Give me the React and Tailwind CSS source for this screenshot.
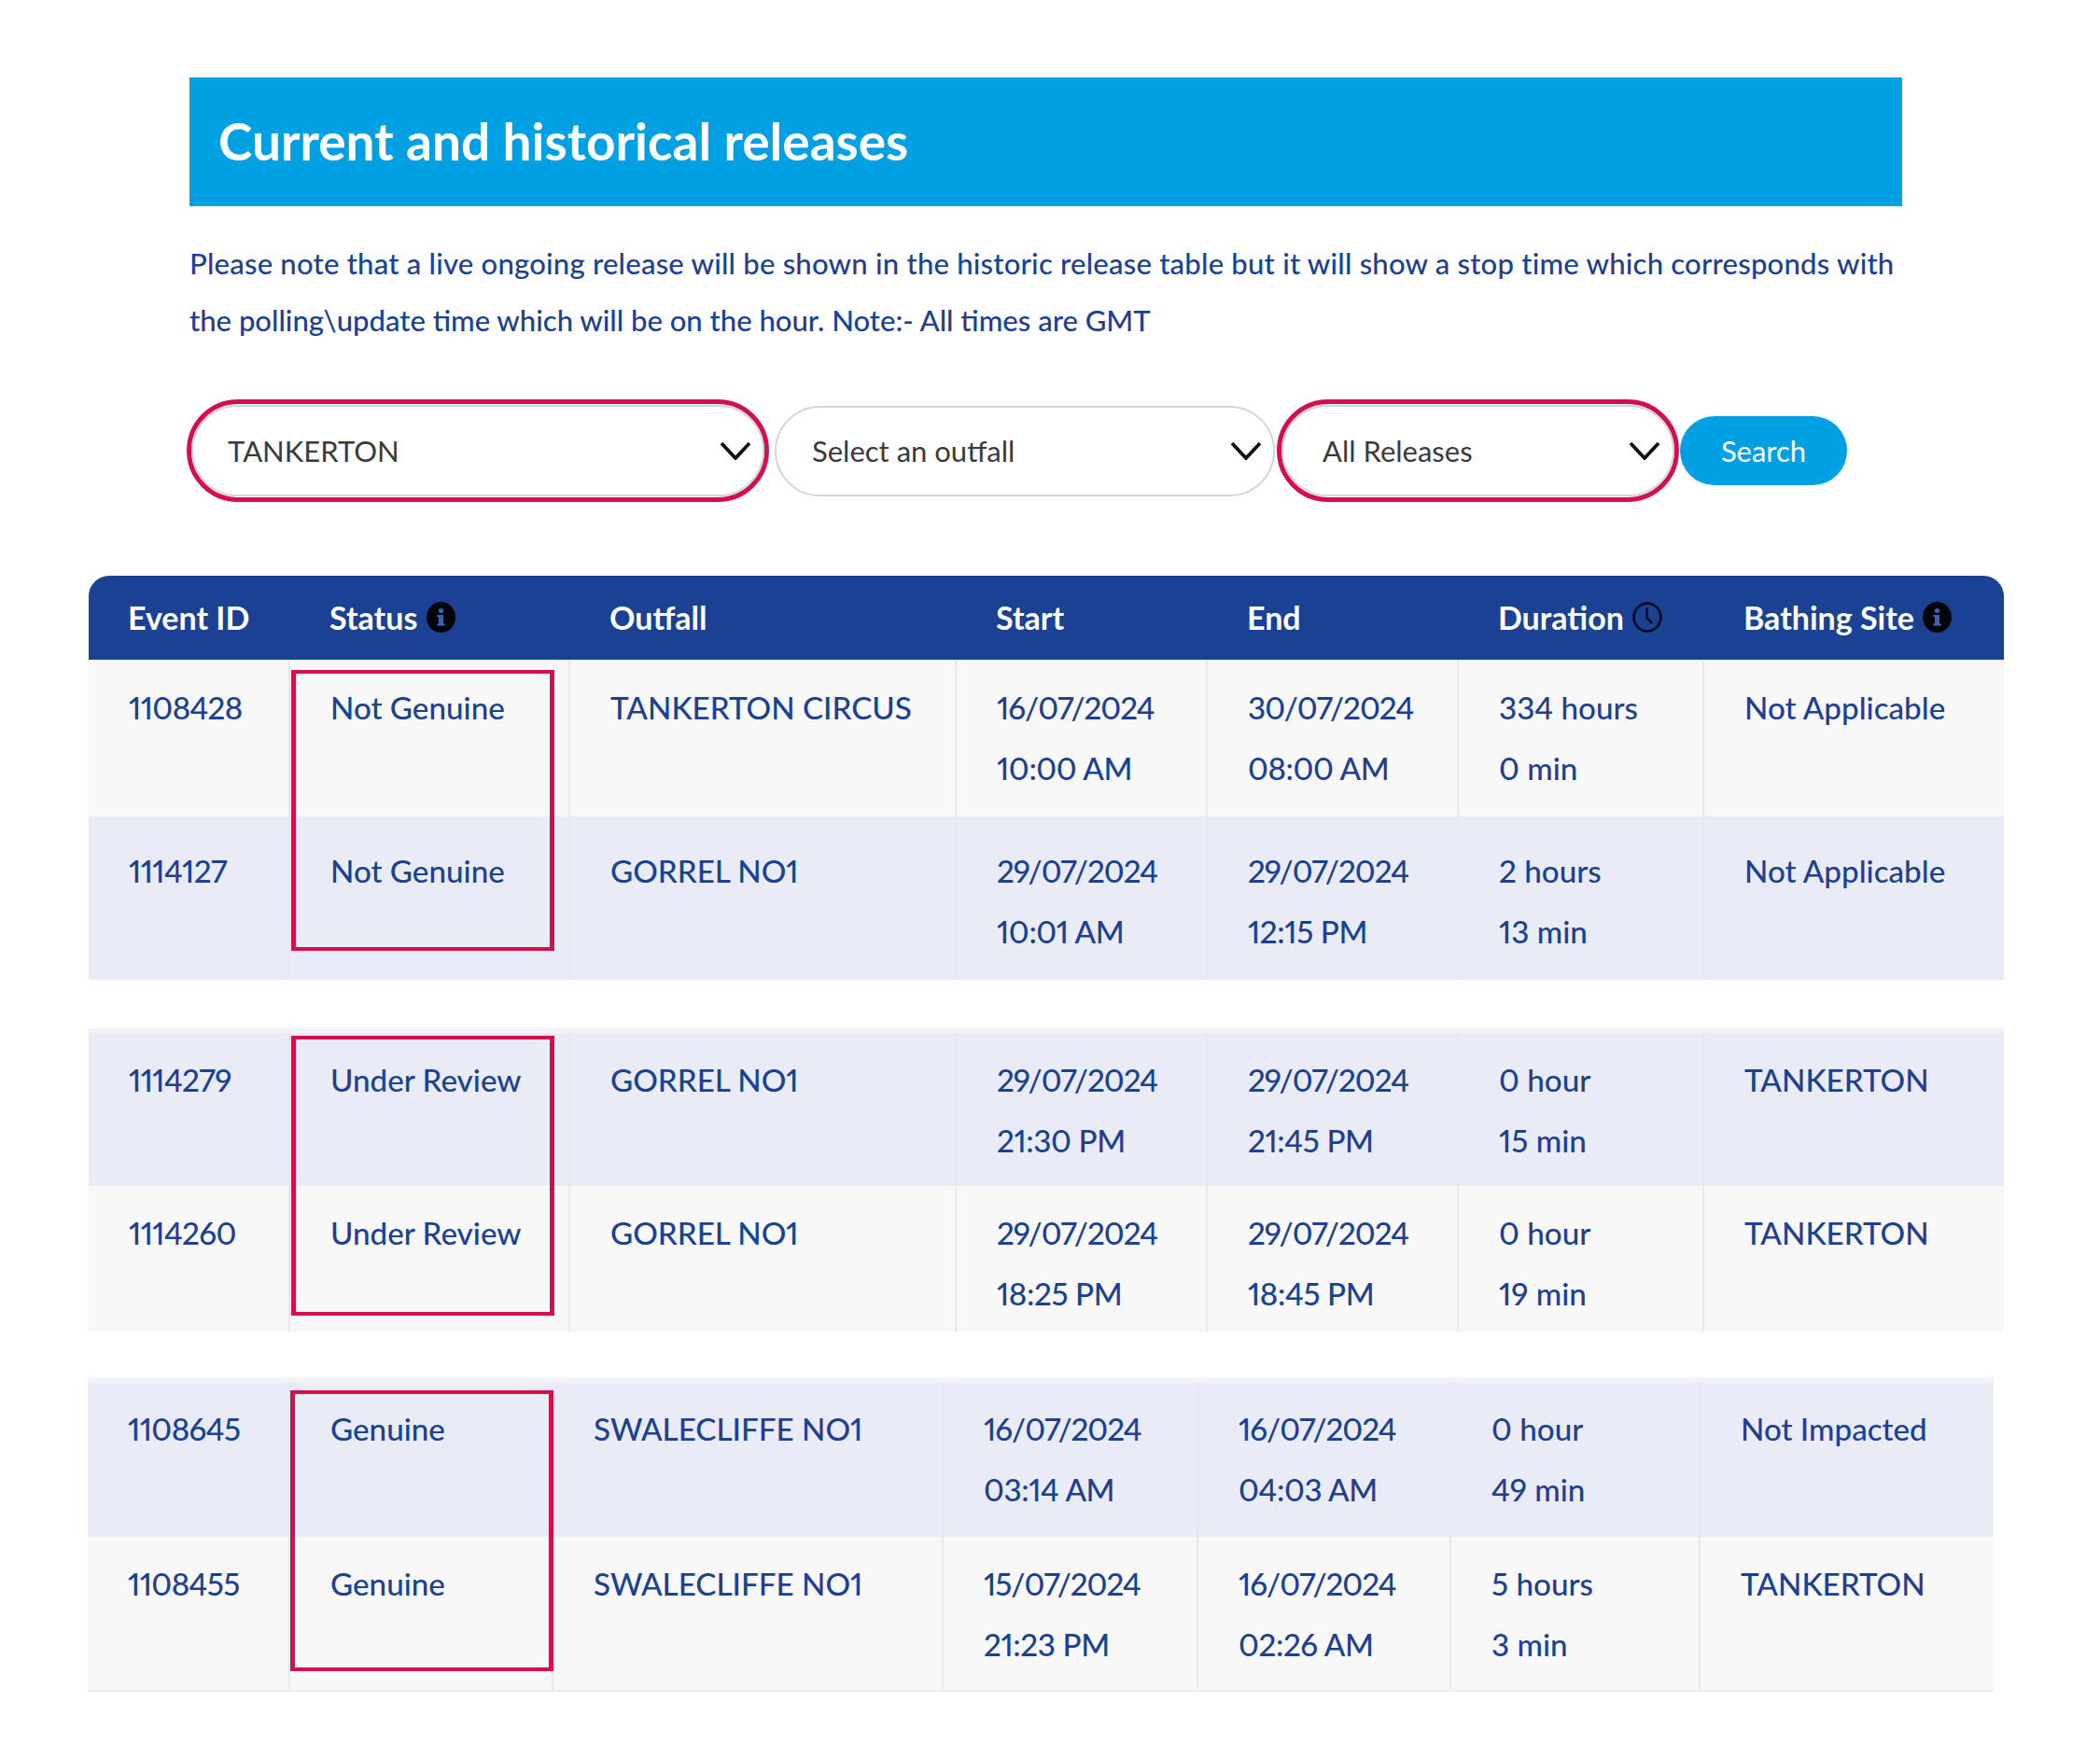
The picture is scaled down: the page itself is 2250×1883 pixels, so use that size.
import React from 'react';

const BASE_COLS = 'grid-cols-[216px_300px_414px_269px_269px_263px_321px]';
const LAST_COLS = 'grid-cols-[217px_282px_418px_273px_271px_267px_314px]';

// digits run wider in this font than in the original, so tighten them a little
const lineTracking = (line) => {
  if (line.includes('/')) return 'tracking-[-1px]';
  if (/^\d+$/.test(line)) return 'tracking-[-0.6px]';
  if (line.includes(':')) return 'tracking-[-0.4px]';
  return '';
};

const Chevron = () => (
  <svg width="34" height="20" viewBox="0 0 34 20" fill="none" className="shrink-0">
    <path d="M2 2 L17 18 L32 2" stroke="#111" strokeWidth="3.8" />
  </svg>
);

const InfoIcon = ({ className = '' }) => (
  <svg width="31" height="33" viewBox="0 0 31 33" className={className}>
    <ellipse cx="15.5" cy="16.5" rx="15.5" ry="16.5" fill="#03050c" />
    <circle cx="15.5" cy="9.5" r="2.6" fill="#3c62ad" />
    <rect x="13" y="14" width="5" height="11" fill="#3c62ad" />
    <rect x="11.4" y="14" width="4" height="2.2" fill="#3c62ad" />
    <rect x="11.4" y="23.4" width="8.4" height="2.2" fill="#3c62ad" />
  </svg>
);

const ClockIcon = ({ className = '' }) => (
  <svg width="32" height="33" viewBox="0 0 32 33" fill="none" className={className}>
    <ellipse cx="16" cy="16.5" rx="14.4" ry="14.9" stroke="#050a1c" strokeWidth="2.6" />
    <path d="M15.5 6.5 V17 L21 23" stroke="#050a1c" strokeWidth="2.4" />
  </svg>
);

const Select = ({ label, width, height = 'h-[97px]', pad, chevronPad }) => (
  <div className={`flex ${width} ${height} items-center justify-between rounded-full border-2 border-[#d5d5d7] bg-white ${pad} ${chevronPad}`}>
    <span className="text-[31px] text-[#3a3a3c]">{label}</span>
    <Chevron />
  </div>
);

const Row = ({ cells, cols, bg, pt, height, top = '', bottom = '' }) => (
  <div className={`grid ${cols} ${height} ${bg} ${top} ${bottom}`}>
    {cells.map((cell, i) => (
      <div key={i} className={`pl-[43px] ${pt} text-[33.2px] font-medium leading-[65px] proportional-nums ${i < cells.length - 1 ? 'border-r-2 border-[#e6e8ee]' : ''}`}>
        {cell.map((line) => <div key={line} className={`whitespace-nowrap ${lineTracking(line)}`}>{line}</div>)}
      </div>
    ))}
  </div>
);

const RedBox = ({ top, height }) => (
  <div className={`pointer-events-none absolute left-[217px] w-[282px] border-x-[5px] border-y-4 border-[#d3104c] ${top} ${height}`} />
);

const headers = [
  { label: 'Event ID' },
  { label: 'Status', icon: <InfoIcon className="ml-[10px]" /> },
  { label: 'Outfall' },
  { label: 'Start' },
  { label: 'End' },
  { label: 'Duration', icon: <ClockIcon className="ml-[9px]" /> },
  { label: 'Bathing Site', icon: <InfoIcon className="ml-[9px]" /> },
];

export default function App() {
  return (
    <div className="min-h-[1883px] bg-white pt-[83px] font-['Lato',sans-serif] text-[#1b4193]">
      <div className="mx-[203px] w-[1835px]">
        <div className="flex h-[138px] items-center bg-[#00a0e3] pb-[2px] pl-[31px]">
          <h1 className="text-[55px] font-bold text-white">Current and historical releases</h1>
        </div>
        <p className="mt-[31px] text-[31.05px] font-medium leading-[60.5px] whitespace-nowrap">
          <span className="tracking-[0.22px]">Please note that a live ongoing release will be shown in the historic release table but it will show a stop time which corresponds with</span>
          <br />
          the polling\update time which will be on the hour. Note:- All times are GMT
        </p>
      </div>

      <div className="mt-[55px] ml-[200px] flex h-[110px] items-center">
        <div className="flex h-[110px] w-[624px] items-center rounded-full border-[5px] border-[#d3104c]">
          <Select label="TANKERTON" width="w-full" height="h-[98px]" pad="pl-[37px]" chevronPad="pr-[12px]" />
        </div>
        <div className="ml-[6px]">
          <Select label="Select an outfall" width="w-[536px]" pad="pl-[38px]" chevronPad="pr-[12px]" />
        </div>
        <div className="ml-[2px] flex h-[110px] w-[431px] items-center rounded-full border-[5px] border-[#d3104c]">
          <Select label="All Releases" width="w-full" height="h-[98px]" pad="pl-[42px]" chevronPad="pr-[13px]" />
        </div>
        <button className="ml-[1px] h-[74px] w-[179px] rounded-full bg-[#00a0e3] text-[31px] text-white">Search</button>
      </div>

      <div className="relative mt-[79px] ml-[95px] w-[2052px]">
        <div className={`grid h-[90px] ${BASE_COLS} items-center rounded-t-[22px] bg-[#1a4193] pb-[2px] text-[34px] font-bold text-white`}>
          {headers.map((h) => (
            <div key={h.label} className="flex items-center pl-[42px]">
              {h.label}
              {h.icon}
            </div>
          ))}
        </div>
        <Row cols={BASE_COLS} bg="bg-[#f8f8f9]" pt="pt-[19px]" height="h-[168px]" cells={[['1108428'], ['Not Genuine'], ['TANKERTON CIRCUS'], ['16/07/2024', '10:00 AM'], ['30/07/2024', '08:00 AM'], ['334 hours', '0 min'], ['Not Applicable']]} />
        <Row cols={BASE_COLS} bg="bg-[#e9ecf6]" pt="pt-[26px]" height="h-[175px]" cells={[['1114127'], ['Not Genuine'], ['GORREL NO1'], ['29/07/2024', '10:01 AM'], ['29/07/2024', '12:15 PM'], ['2 hours', '13 min'], ['Not Applicable']]} />
        <RedBox top="top-[101px]" height="h-[301px]" />
      </div>

      <div className="relative mt-[52px] ml-[95px] w-[2052px]">
        <Row cols={BASE_COLS} bg="bg-[#e9ecf6]" pt="pt-[18px]" height="h-[169px]" top="border-t-[5px] border-[#f2f3f8]" cells={[['1114279'], ['Under Review'], ['GORREL NO1'], ['29/07/2024', '21:30 PM'], ['29/07/2024', '21:45 PM'], ['0 hour', '15 min'], ['TANKERTON']]} />
        <Row cols={BASE_COLS} bg="bg-[#f8f8f9]" pt="pt-[18px]" height="h-[156px]" cells={[['1114260'], ['Under Review'], ['GORREL NO1'], ['29/07/2024', '18:25 PM'], ['29/07/2024', '18:45 PM'], ['0 hour', '19 min'], ['TANKERTON']]} />
        <RedBox top="top-[8px]" height="h-[300px]" />
      </div>

      <div className="relative mt-[49px] ml-[94px] w-[2042px]">
        <Row cols={LAST_COLS} bg="bg-[#e9ecf6]" pt="pt-[17px]" height="h-[171px]" top="border-t-[6px] border-[#f2f3f8]" cells={[['1108645'], ['Genuine'], ['SWALECLIFFE NO1'], ['16/07/2024', '03:14 AM'], ['16/07/2024', '04:03 AM'], ['0 hour', '49 min'], ['Not Impacted']]} />
        <Row cols={LAST_COLS} bg="bg-[#f8f8f9]" pt="pt-[18px]" height="h-[166px]" bottom="border-b-2 border-[#eeeef1]" cells={[['1108455'], ['Genuine'], ['SWALECLIFFE NO1'], ['15/07/2024', '21:23 PM'], ['16/07/2024', '02:26 AM'], ['5 hours', '3 min'], ['TANKERTON']]} />
        <RedBox top="top-[14px]" height="h-[301px]" />
      </div>
    </div>
  );
}
